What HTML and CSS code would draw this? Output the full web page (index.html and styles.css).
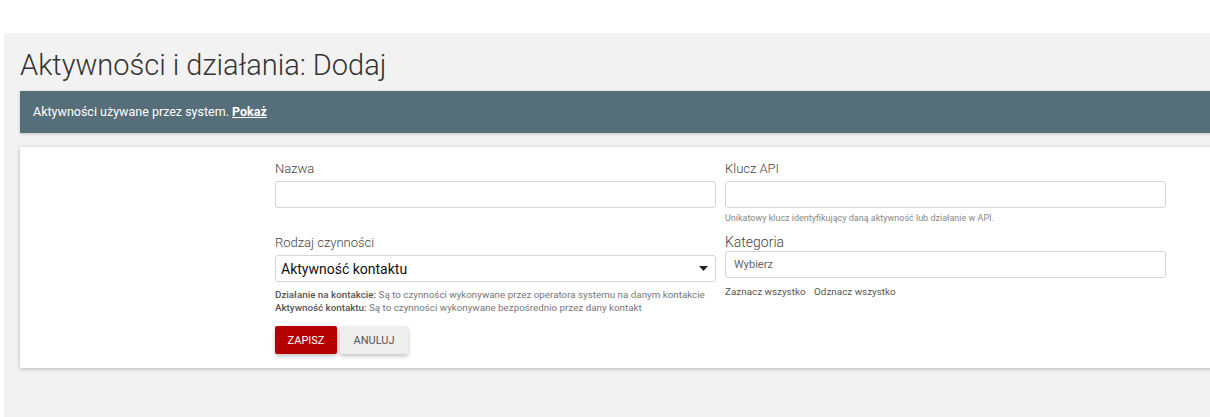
FILE: index.html
```html
<!DOCTYPE html>
<html lang="pl">
<head>
  <meta charset="UTF-8">
  <title>Aktywności i działania: Dodaj</title>
  <link rel="stylesheet" href="styles.css">
</head>
<body>

<div id="page">
  <h1>Aktywności i działania: Dodaj</h1>

  <div class="banner">
    Aktywności używane przez system. <a href="#">Pokaż</a>
  </div>

  <div class="card">
    <div class="form">
      <div class="col">
        <label class="lbl">Nazwa</label>
        <div class="input"></div>

        <label class="lbl lbl-gap">Rodzaj czynności</label>
        <div class="input select">
          <span>Aktywność kontaktu</span>
          <svg width="9" height="5" viewBox="0 0 9 5"><path d="M0 0h9L4.5 5z" fill="#222"/></svg>
        </div>
        <div class="help">
          <div><b>Działanie na kontakcie:</b> Są to czynności wykonywane przez operatora systemu na danym kontakcie</div>
          <div><b>Aktywność kontaktu:</b> Są to czynności wykonywane bezpośrednio przez dany kontakt</div>
        </div>

        <div class="buttons">
          <button class="btn btn-save">Zapisz</button>
          <button class="btn btn-cancel">Anuluj</button>
        </div>
      </div>

      <div class="col">
        <label class="lbl">Klucz API</label>
        <div class="input"></div>
        <div class="help help-api">Unikatowy klucz identyfikujący daną aktywność lub działanie w API.</div>

        <label class="lbl lbl-cat">Kategoria</label>
        <div class="input input-cat">Wybierz</div>
        <div class="links">
          <a href="#">Zaznacz wszystko</a>
          <a href="#">Odznacz wszystko</a>
        </div>
      </div>
    </div>
  </div>
</div>

</body>
</html>
```

FILE: styles.css
```css
body {
  font-family: Roboto, "Liberation Sans", sans-serif;
  background-color: #fff;
  margin: 0;
  overflow: hidden;
}

#page {
  margin: 33px 0 0 4px;
  padding: 0 0 0 16px;
  background-color: #f2f2f2;
  width: 1220px;
  height: 384px;
}

h1 {
  margin: 0;
  padding-top: 15px;
  font-size: 29px;
  font-weight: 300;
  line-height: 35px;
  color: #333;
  height: 43px;
}

.banner {
  background-color: #566e79;
  color: #fff;
  font-size: 12.5px;
  height: 42px;
  line-height: 42px;
  padding-left: 13px;
  box-shadow: 0 1px 3px rgba(0,0,0,0.2);
}

.banner a {
  color: #fff;
  font-weight: bold;
}

.card {
  margin-top: 14px;
  background-color: #fff;
  padding: 14px 0 14px 255px;
  box-shadow: 0 1px 4px rgba(0,0,0,0.25);
}

.form {
  display: flex;
  gap: 9px;
}

.col {
  width: 441px;
  display: flex;
  flex-direction: column;
}

.lbl {
  font-size: 13px;
  font-weight: 300;
  line-height: 16px;
  color: #444;
  margin-bottom: 4px;
}

.lbl-gap {
  margin-top: 27px;
}

.lbl-cat {
  margin-top: 9px;
  font-size: 14px;
  margin-bottom: 1px;
}

.input {
  height: 25px;
  border: 1px solid #d4d4d4;
  border-radius: 3px;
  box-sizing: content-box;
}

.select {
  display: flex;
  align-items: center;
  justify-content: space-between;
  padding: 0 7px 0 5px;
  font-size: 14px;
  color: #111;
}

.input-cat {
  padding-left: 8px;
  font-size: 11px;
  line-height: 25px;
  color: #666;
}

.help {
  font-size: 9.8px;
  line-height: 13px;
  color: #777;
  margin-top: 6px;
}

.help b {
  color: #555;
  font-weight: 500;
}

.help-api {
  margin-top: 4px;
  font-size: 9px;
  color: #888;
}

.links {
  margin-top: 7px;
  font-size: 9.9px;
  line-height: 13px;
}

.links a {
  color: #555;
  text-decoration: none;
  margin-right: 6px;
}

.buttons {
  margin-top: 12px;
  display: flex;
  gap: 3px;
}

.btn {
  height: 28px;
  border: none;
  border-radius: 2px;
  font-family: Roboto, "Liberation Sans", sans-serif;
  font-size: 11px;
  text-transform: uppercase;
  box-shadow: 0 2px 4px rgba(0,0,0,0.25);
  cursor: pointer;
}

.btn-save {
  width: 62px;
  background-color: #b50000;
  color: #fff;
}

.btn-cancel {
  width: 68px;
  background-color: #eeeeee;
  color: #555;
}
```
